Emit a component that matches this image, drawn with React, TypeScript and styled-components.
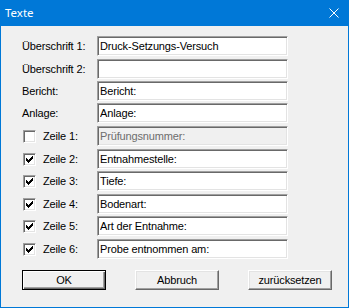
import React from 'react';
import styled, { createGlobalStyle } from 'styled-components';

const Global = createGlobalStyle`
  html, body { margin: 0; padding: 0; background: #f0f0f0; }
  body { font-family: "Liberation Sans", Arial, sans-serif; }
`;

const Window = styled.div`
  width: 349px;
  height: 308px;
  box-sizing: border-box;
  border: 1px solid #0078d7;
  border-top: none;
  background: #f0f0f0;
  display: flex;
  flex-direction: column;
`;

const TitleBar = styled.div`
  height: 26px;
  flex: none;
  background: #0078d7;
  color: #fff;
  display: flex;
  align-items: center;
  justify-content: space-between;
  padding: 0 9px 0 4px;
`;

const Title = styled.span`
  font-family: "Noto Sans", "Liberation Sans", sans-serif;
  font-size: 11.5px;
  line-height: 26px;
`;

const CloseIcon = styled.svg`
  width: 10px;
  height: 10px;
  display: block;
`;

const Body = styled.div`
  flex: 1;
  padding: 10px 0 0 21px;
  font-size: 11px;
  letter-spacing: -0.15px;
  color: #000;
`;

const Form = styled.div`
  display: grid;
  grid-template-columns: 75px 191px;
  grid-template-rows: 23px 22px 22px 23px 23px 22px 23px 22px 23px 20px;
`;

const LabelCell = styled.div`
  display: flex;
  align-items: center;
  height: 20px;
  gap: 7px;
`;

const Label = styled.span<{ $indent?: boolean }>`
  line-height: 20px;
  white-space: nowrap;
`;

const Field = styled.input<{ $disabled?: boolean }>`
  box-sizing: border-box;
  width: 191px;
  height: 20px;
  margin: 0;
  padding: 0 0 0 2px;
  font-family: "Liberation Sans", Arial, sans-serif;
  font-size: 11px;
  letter-spacing: -0.15px;
  border: 1px solid;
  border-color: #a0a0a0 #ffffff #ffffff #a0a0a0;
  box-shadow: inset 1px 1px 0 #696969, inset -1px -1px 0 #e3e3e3;
  background: ${p => (p.$disabled ? '#f0f0f0' : '#ffffff')};
  color: ${p => (p.$disabled ? '#6d6d6d' : '#000000')};
  -webkit-text-fill-color: ${p => (p.$disabled ? '#6d6d6d' : '#000000')};
  outline: none;
`;

const Box = styled.span`
  box-sizing: border-box;
  width: 13px;
  height: 13px;
  margin-left: 1px;
  flex: none;
  background: #fff;
  border: 1px solid;
  border-color: #a0a0a0 #ffffff #ffffff #a0a0a0;
  box-shadow: inset 1px 1px 0 #696969, inset -1px -1px 0 #e3e3e3;
  display: flex;
  align-items: center;
  justify-content: center;
`;

const CheckSvg = styled.svg`
  width: 7px;
  height: 7px;
  display: block;
`;

const Buttons = styled.div`
  display: flex;
  gap: 29px;
  margin-top: 11px;
`;

const Button = styled.button<{ $default?: boolean }>`
  box-sizing: border-box;
  width: 84px;
  height: 20px;
  margin: 0;
  padding: 0;
  font-family: "Liberation Sans", Arial, sans-serif;
  font-size: 11px;
  letter-spacing: -0.15px;
  color: #000;
  background: #f0f0f0;
  border: 1px solid;
  border-color: ${p => (p.$default ? '#000 #000 #000 #000' : '#ffffff #696969 #696969 #ffffff')};
  box-shadow: ${p =>
    p.$default
      ? 'inset 1px 1px 0 #ffffff, inset -1px -1px 0 #696969, inset -2px -2px 0 #a0a0a0'
      : 'inset -1px -1px 0 #a0a0a0, inset 1px 1px 0 #e3e3e3'};
`;

const Check: React.FC<{ checked: boolean }> = ({ checked }) => (
  <Box>
    {checked && (
      <CheckSvg viewBox="0 0 7 7">
        <path d="M0 2h1v1h1v1h1V3h1V2h1V1h1V0h1v3H6v1H5v1H4v1H3v1H2V6H1V5H0z" fill="#000" />
      </CheckSvg>
    )}
  </Box>
);

const headers = [
  { label: 'Überschrift 1:', value: 'Druck-Setzungs-Versuch' },
  { label: 'Überschrift 2:', value: '' },
  { label: 'Bericht:', value: 'Bericht:' },
  { label: 'Anlage:', value: 'Anlage:' },
];

const lines = [
  { label: 'Zeile 1:', value: 'Prüfungsnummer:', checked: false },
  { label: 'Zeile 2:', value: 'Entnahmestelle:', checked: true },
  { label: 'Zeile 3:', value: 'Tiefe:', checked: true },
  { label: 'Zeile 4:', value: 'Bodenart:', checked: true },
  { label: 'Zeile 5:', value: 'Art der Entnahme:', checked: true },
  { label: 'Zeile 6:', value: 'Probe entnommen am:', checked: true },
];

export default function App() {
  return (
    <>
      <Global />
      <Window>
        <TitleBar>
          <Title>Texte</Title>
          <CloseIcon viewBox="0 0 10 10">
            <path d="M0.5 0.5L9.5 9.5M9.5 0.5L0.5 9.5" stroke="#fff" strokeWidth="1" />
          </CloseIcon>
        </TitleBar>
        <Body>
          <Form>
            {headers.map(h => (
              <React.Fragment key={h.label}>
                <LabelCell>
                  <Label>{h.label}</Label>
                </LabelCell>
                <Field readOnly defaultValue={h.value} />
              </React.Fragment>
            ))}
            {lines.map(l => (
              <React.Fragment key={l.label}>
                <LabelCell>
                  <Check checked={l.checked} />
                  <Label>{l.label}</Label>
                </LabelCell>
                <Field readOnly $disabled={!l.checked} defaultValue={l.value} />
              </React.Fragment>
            ))}
          </Form>
          <Buttons>
            <Button $default>OK</Button>
            <Button>Abbruch</Button>
            <Button>zurücksetzen</Button>
          </Buttons>
        </Body>
      </Window>
    </>
  );
}
